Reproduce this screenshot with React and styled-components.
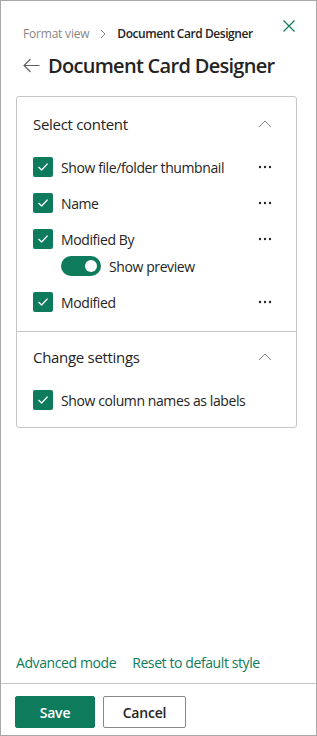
import React from "react";
import styled, { createGlobalStyle } from "styled-components";

const green = "#0f7b5d";

const Global = createGlobalStyle`
  html, body { margin: 0; padding: 0; background: #fff; }
  body { font-family: "Open Sans", "Noto Sans", sans-serif; color: #252423; }
  * { box-sizing: border-box; }
`;

const Panel = styled.div`
  width: 317px;
  height: 736px;
  border: 1px solid #a8a8a8;
  display: flex;
  flex-direction: column;
  background: #fff;
`;

const Body = styled.div`
  flex: 1;
  display: flex;
  flex-direction: column;
  padding: 0 19px 0 14px;
`;

const TopRow = styled.div`
  display: flex;
  align-items: flex-start;
  justify-content: space-between;
  padding-top: 17px;
  height: 46px;
`;

const Crumbs = styled.div`
  display: flex;
  align-items: center;
  font-size: 12px;
  padding: 7px 0 0 8px;
  white-space: nowrap;
`;

const CrumbLink = styled.span`
  color: #8a8886;
  letter-spacing: -0.2px;
`;

const CrumbSep = styled.span`
  display: inline-flex;
  width: 28px;
  justify-content: center;
  color: #8a8886;
`;

const CrumbCurrent = styled.span`
  color: #252423;
  font-weight: 600;
  letter-spacing: -0.45px;
`;

const IconButton = styled.button`
  border: none;
  background: none;
  padding: 0;
  display: inline-flex;
  align-items: center;
  justify-content: center;
  width: ${(p) => p.$size || 24}px;
  height: ${(p) => p.$size || 24}px;
  cursor: pointer;
`;

const TitleRow = styled.div`
  display: flex;
  align-items: center;
  gap: 8px;
  padding-left: 8px;
  height: 36px;
`;

const Title = styled.h1`
  margin: 0;
  font-size: 20px;
  font-weight: 600;
  color: #252423;
  letter-spacing: -0.7px;
  white-space: nowrap;
`;

const Card = styled.div`
  margin-top: 13px;
  margin-left: 1px;
  border: 1px solid #c8c6c4;
  border-radius: 3px;
`;

const Section = styled.section`
  padding: ${(p) => p.$top ?? 8}px 0 ${(p) => p.$bottom ?? 18}px 16px;
  border-top: ${(p) => (p.$divided ? "1px solid #c8c6c4" : "none")};
`;

const SectionHeader = styled.div`
  display: flex;
  align-items: center;
  justify-content: space-between;
  height: 38px;
  margin-bottom: 14px;
  padding-right: 19px;
`;

const SectionTitle = styled.h2`
  margin: 0;
  font-size: 15px;
  font-weight: 400;
  color: #252423;
  letter-spacing: -0.3px;
`;

const Rows = styled.div`
  display: flex;
  flex-direction: column;
`;

const Row = styled.div`
  display: flex;
  align-items: center;
  justify-content: space-between;
  height: 20px;
  padding-right: 19px;
  margin-top: 16px;
  &:first-child { margin-top: 0; }
`;

const CheckLabel = styled.label`
  display: flex;
  align-items: center;
  gap: 8px;
  font-size: 14px;
  color: #252423;
  letter-spacing: -0.4px;
  white-space: nowrap;
`;

const Box = styled.span`
  width: 20px;
  height: 20px;
  border-radius: 2px;
  background: ${green};
  display: inline-flex;
  align-items: center;
  justify-content: center;
  flex-shrink: 0;
`;

const SubRow = styled.div`
  display: flex;
  align-items: center;
  gap: 8px;
  margin-top: 7px;
  margin-left: 28px;
  height: 20px;
  font-size: 14px;
  letter-spacing: -0.4px;
  white-space: nowrap;
`;

const Track = styled.span`
  width: 40px;
  height: 20px;
  border-radius: 10px;
  background: ${green};
  display: inline-flex;
  align-items: center;
  justify-content: flex-end;
  padding-right: 4px;
`;

const Knob = styled.span`
  width: 12px;
  height: 12px;
  border-radius: 50%;
  background: #fff;
`;

const Spacer = styled.div`
  flex: 1;
`;

const Links = styled.div`
  display: flex;
  gap: 16px;
  padding-left: 1px;
  margin-bottom: 11px;
`;

const Link = styled.a`
  color: ${green};
  font-size: 14px;
  letter-spacing: -0.4px;
  text-decoration: none;
  white-space: nowrap;
`;

const Footer = styled.div`
  border-top: 1px solid #c8c6c4;
  display: flex;
  gap: 8px;
  padding: 12px 15px 7px 14px;
`;

const Button = styled.button`
  height: 32px;
  width: ${(p) => p.$w}px;
  border-radius: 2px;
  font-family: inherit;
  font-size: 14px;
  font-weight: 600;
  letter-spacing: -0.2px;
  cursor: pointer;
  border: 1px solid ${(p) => (p.$primary ? green : "#8a8886")};
  background: ${(p) => (p.$primary ? green : "#fff")};
  color: ${(p) => (p.$primary ? "#fff" : "#252423")};
`;

const Check = () => (
  <Box>
    <svg width="12" height="12" viewBox="0 0 12 12" fill="none">
      <path d="M1.8 6.3 L4.6 9 L10.2 3" stroke="#fff" strokeWidth="1.2" strokeLinecap="round" strokeLinejoin="round" />
    </svg>
  </Box>
);

const More = () => (
  <IconButton $size={24} aria-label="More">
    <svg width="14" height="4" viewBox="0 0 14 4">
      <circle cx="2" cy="2" r="1.2" fill="#252423" />
      <circle cx="7" cy="2" r="1.2" fill="#252423" />
      <circle cx="12" cy="2" r="1.2" fill="#252423" />
    </svg>
  </IconButton>
);

const Chevron = () => (
  <IconButton $size={24} aria-label="Collapse">
    <svg width="14" height="8" viewBox="0 0 14 8" fill="none">
      <path d="M1 7 L7 1 L13 7" stroke="#8a8886" strokeWidth="1" />
    </svg>
  </IconButton>
);

const CheckRow = ({ label, more = true }) => (
  <Row>
    <CheckLabel>
      <Check />
      {label}
    </CheckLabel>
    {more && <More />}
  </Row>
);

export default function App() {
  return (
    <>
      <Global />
      <Panel>
        <Body>
          <TopRow>
            <Crumbs>
              <CrumbLink>Format view</CrumbLink>
              <CrumbSep>
                <svg width="6" height="10" viewBox="0 0 6 10" fill="none">
                  <path d="M1 1 L5 5 L1 9" stroke="#8a8886" strokeWidth="1" />
                </svg>
              </CrumbSep>
              <CrumbCurrent>Document Card Designer</CrumbCurrent>
            </Crumbs>
            <IconButton $size={16} aria-label="Close">
              <svg width="12" height="12" viewBox="0 0 12 12" fill="none">
                <path d="M0.5 0.5 L11.5 11.5 M11.5 0.5 L0.5 11.5" stroke={green} strokeWidth="1.2" />
              </svg>
            </IconButton>
          </TopRow>
          <TitleRow>
            <svg width="17" height="15" viewBox="0 0 17 15" fill="none">
              <path d="M16.5 7.5 H1 M7.5 1 L1 7.5 L7.5 14" stroke="#605e5c" strokeWidth="1.1" />
            </svg>
            <Title>Document Card Designer</Title>
          </TitleRow>
          <Card>
            <Section $bottom={19}>
              <SectionHeader>
                <SectionTitle>Select content</SectionTitle>
                <Chevron />
              </SectionHeader>
              <Rows>
                <CheckRow label="Show file/folder thumbnail" />
                <CheckRow label="Name" />
                <CheckRow label="Modified By" />
                <SubRow>
                  <Track>
                    <Knob />
                  </Track>
                  Show preview
                </SubRow>
                <CheckRow label="Modified" />
              </Rows>
            </Section>
            <Section $divided $top={6} $bottom={17}>
              <SectionHeader>
                <SectionTitle>Change settings</SectionTitle>
                <Chevron />
              </SectionHeader>
              <Rows>
                <CheckRow label="Show column names as labels" more={false} />
              </Rows>
            </Section>
          </Card>
          <Spacer />
          <Links>
            <Link href="#">Advanced mode</Link>
            <Link href="#">Reset to default style</Link>
          </Links>
        </Body>
        <Footer>
          <Button $primary $w={80}>Save</Button>
          <Button $w={83}>Cancel</Button>
        </Footer>
      </Panel>
    </>
  );
}
